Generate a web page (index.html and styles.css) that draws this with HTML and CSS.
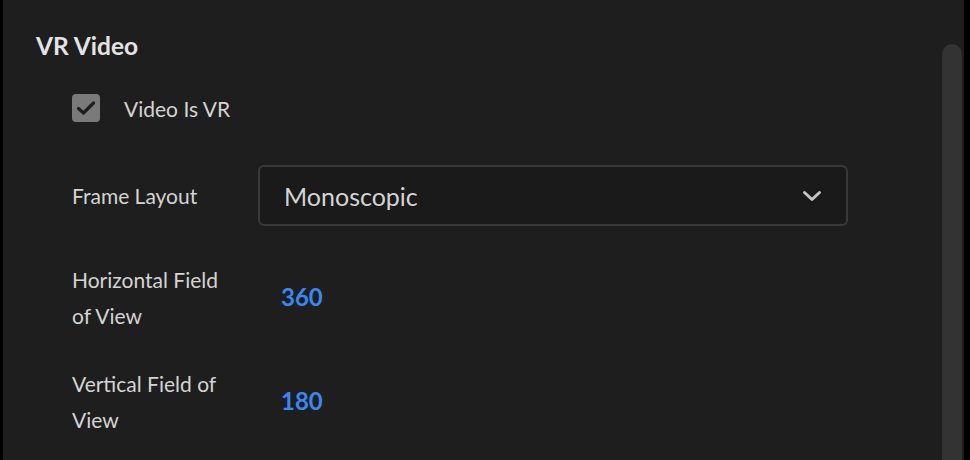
FILE: index.html
```html
<!doctype html>
<html lang="en">
<head>
	<meta charset="UTF-8">
	<title>VR Video</title>
	<link rel="stylesheet" href="styles.css">
</head>
<body>
	<div class="panel">
		<div class="content">
			<h2 class="section-title">VR Video</h2>

			<label class="check-row">
				<span class="checkbox">
					<svg width="20" height="16" viewBox="0 0 20 16"><path d="M2.5 8.5 L7.5 13 L17.5 3" fill="none" stroke="#1e1e1e" stroke-width="3.2" stroke-linecap="round" stroke-linejoin="round"/></svg>
				</span>
				<span class="check-label">Video Is VR</span>
			</label>

			<div class="field-row">
				<div class="field-label">Frame Layout</div>
				<div class="dropdown">
					<span class="dropdown-value">Monoscopic</span>
					<svg class="chevron" width="20" height="12" viewBox="0 0 20 12"><path d="M2.5 2.5 L10 9.5 L17.5 2.5" fill="none" stroke="#c4c4c4" stroke-width="3" stroke-linecap="round" stroke-linejoin="round"/></svg>
				</div>
			</div>

			<div class="field-row field-row-tall">
				<div class="field-label">Horizontal Field of View</div>
				<div class="field-value">360</div>
			</div>

			<div class="field-row field-row-tall field-row-last">
				<div class="field-label">Vertical Field of View</div>
				<div class="field-value">180</div>
			</div>
		</div>
		<div class="scroll-track">
			<div class="scroll-thumb"></div>
		</div>
	</div>
</body>
</html>
```

FILE: styles.css
```css
* {
	margin: 0;
	padding: 0;
	box-sizing: border-box;
}

body {
	width: 970px;
	height: 460px;
	overflow: hidden;
	background: #000;
	font-family: Lato, "Open Sans", sans-serif;
	color: #d4d4d4;
}

.panel {
	display: flex;
	height: 460px;
	margin: 0 6px 0 3px;
	background: #1e1e1e;
}

.content {
	flex: 1;
	padding: 31px 0 0 33px;
}

.section-title {
	font-size: 24.5px;
	font-weight: 700;
	line-height: 30px;
	color: #e4e4e4;
}

.check-row {
	display: flex;
	align-items: center;
	gap: 24px;
	margin: 33px 0 0 36px;
}

.checkbox {
	display: flex;
	align-items: center;
	justify-content: center;
	width: 28px;
	height: 28px;
	border-radius: 4px;
	background: #7a7a7a;
}

.check-label {
	font-size: 21px;
}

.field-row {
	display: flex;
	align-items: center;
	margin: 43px 0 0 36px;
}

.field-label {
	width: 186px;
	padding-right: 28px;
	font-size: 21px;
	line-height: 36px;
}

.dropdown {
	display: flex;
	align-items: center;
	justify-content: space-between;
	width: 590px;
	height: 61px;
	padding: 0 24px 0 24px;
	border: 2px solid #393939;
	border-radius: 6px;
	background: #1a1a1a;
}

.dropdown-value {
	font-size: 25px;
	color: #d4d4d4;
}

.field-row-tall {
	margin-top: 36px;
}

.field-row-last {
	margin-top: 32px;
}

.field-value {
	padding: 0 0 4px 23px;
	font-size: 24px;
	font-weight: 700;
	color: #3b87f0;
}

.scroll-track {
	width: 22px;
	padding-top: 44px;
}

.scroll-thumb {
	width: 20px;
	height: 100%;
	border-radius: 10px 10px 0 0;
	background: #333;
}
```
